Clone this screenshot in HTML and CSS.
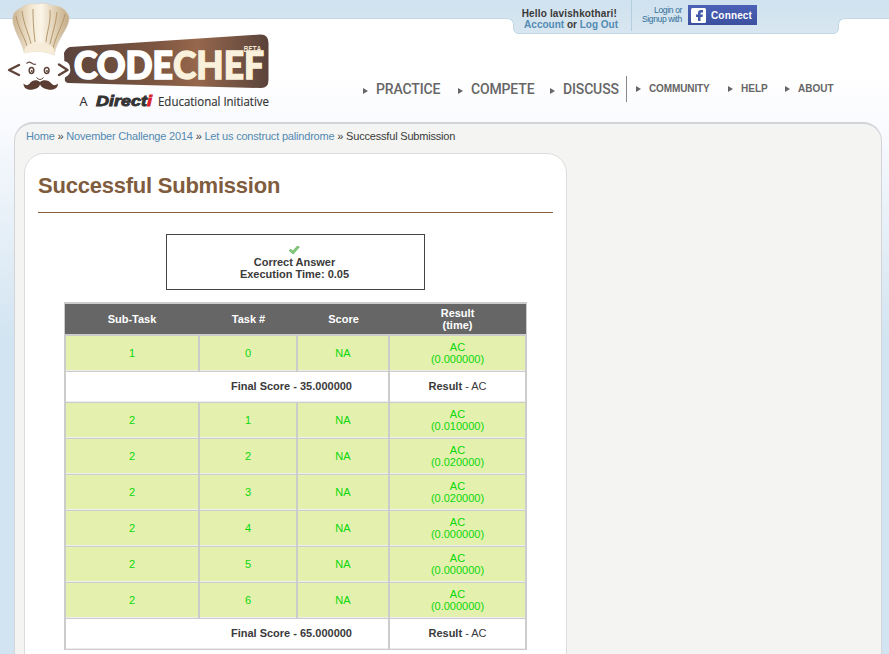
FILE: index.html
```
<!DOCTYPE html>
<html lang="en">
<head>
<meta charset="utf-8">
<title>Successful Submission | CodeChef</title>
<link rel="stylesheet" href="styles.css">
</head>
<body>
<header class="header">
  <svg class="topbar" width="889" height="36" viewBox="0 0 889 36">
    <defs><linearGradient id="bar" x1="0" y1="0" x2="0" y2="1"><stop offset="0" stop-color="#cfe2ef"/><stop offset="1" stop-color="#d8e6f0"/></linearGradient></defs>
    <path d="M-2-2V18.500H506Q513.500 18.500 513.500 25V28Q513.500 33.500 519 33.500H833Q838.500 33.500 838.500 28V25Q838.500 18.500 846 18.500H891V-2Z" fill="url(#bar)" stroke="#c3d8e5"/>
  </svg>
  <svg class="logo" width="280" height="116" viewBox="0 0 280 116">
    <defs>
      <linearGradient id="board" x1="0" x2="1"><stop offset="0" stop-color="#5b443c"/><stop offset=".45" stop-color="#7d5641"/><stop offset=".65" stop-color="#96674c"/><stop offset="1" stop-color="#5a433b"/></linearGradient>
      <linearGradient id="hat" x1="0" x2="1"><stop offset="0" stop-color="#cbb391"/><stop offset=".3" stop-color="#f0e5cf"/><stop offset=".5" stop-color="#fbf5e8"/><stop offset=".75" stop-color="#e0cfb2"/><stop offset="1" stop-color="#c2aa86"/></linearGradient>
    </defs>
    <path d="M70 47L260 34.500Q268.500 34 268.500 43V80Q268.500 88.500 260 88L68 83Q64 82 65 78L64 53Q66 48 70 47Z" fill="url(#board)"/>
    <path d="M24 52C19 57 16 60 15 65C14 72 18 77 23 78C26 87 52 87 57 79C66 79 72 74 70 68C70 62 65 60 60 62C58 57 57 54 54 52Z" fill="#fff"/>
    <path d="M24 51C19 36 11 26 13 16C14 10 20 9 24 6C30 3 34 4 38 4C44 2 49 4 53 6C60 5 67 10 69 17C70 28 57 38 54 55C43 50 32 51 24 53Z" fill="url(#hat)" stroke="#d6cec0" stroke-width=".6"/>
    <path d="M16 16C18 28 24 36 27 46M22 11C24 26 29 34 31 44M33 9C33 24 34 32 35 42M50 10C51 23 47 31 46 42M57 12C56 24 52 34 50 44M65 14C63 25 55 37 53 49" fill="none" stroke="#b4976b" stroke-width="1"/>
    <path d="M24 53Q24 44 34 43T53 47Q55 50 54 55Q40 49 24 53Z" fill="#f6ecd8"/>
    <g fill="none" stroke="#60443a" stroke-width="2.400" stroke-linecap="round" stroke-linejoin="round"><path d="M19 65L9 70L19 75"/><path d="M59 64.500L67.500 70L59 75"/></g>
    <path d="M26.500 63.500Q29 61 31.500 63T36 64" fill="none" stroke="#60443a" stroke-width="1.200"/>
    <ellipse cx="31.500" cy="70.500" rx="2.300" ry="2.900" fill="#fff" stroke="#60443a" stroke-width="1.500"/><circle cx="31.800" cy="71" r="1" fill="#60443a"/>
    <ellipse cx="46.700" cy="70.500" rx="2.300" ry="2.900" fill="#fff" stroke="#60443a" stroke-width="1.500"/><circle cx="47" cy="71" r="1" fill="#60443a"/>
    <path d="M36.500 77.500Q40 81.500 43.500 77.500" fill="none" stroke="#60443a"/>
    <path d="M40 82C37 79 32 80 30 83C28.500 85.500 26 86 23.500 83.500C23.500 90 30 90 33 89.500C37 89 39.500 87 40 84.500C41 87 44 89 48 89.500C51 90 58 90 58 83.500C55 86 53 85.500 51 83C49 80 43 79 40 82Z" fill="#5b3d34"/>
    <text class="logo-code" x="74" y="78.500" textLength="99" lengthAdjust="spacingAndGlyphs">CODE</text>
    <text class="logo-chef" x="173" y="79" textLength="91" lengthAdjust="spacingAndGlyphs">CHEF</text>
    <text class="logo-beta" x="243.500" y="51.500" textLength="18" lengthAdjust="spacingAndGlyphs">BETA</text>
    <text class="tag" x="79.500" y="106" textLength="8" lengthAdjust="spacingAndGlyphs">A</text>
    <text class="directi" x="96" y="106" textLength="56" lengthAdjust="spacingAndGlyphs">Direct<tspan fill="#d9232e">i</tspan></text>
    <text class="tag" x="158" y="106" textLength="111" lengthAdjust="spacingAndGlyphs">Educational Initiative</text>
  </svg>
  <div class="right">
    <div class="account">
      <div class="hello"><span class="who">Hello lavishkothari!</span><br><a>Account</a> or <a>Log Out</a></div>
      <div class="login">Login or<br>Signup with</div>
      <div class="connect">
        <svg width="15" height="15" viewBox="0 0 15 15"><rect width="15" height="15" rx="1.500" fill="#fff"/><path d="M7 13V9H5V6.500H7V5Q7 2 10 2H12V4.500H10.500Q9.500 4.500 9.500 5.500V6.500H12L11.500 9H9.500V13Z" fill="#4358aa"/></svg>
        <span>Connect</span>
      </div>
    </div>
    <nav class="nav">
      <a class="big practice">PRACTICE</a><a class="big compete">COMPETE</a><a class="big discuss">DISCUSS</a>
      <span class="divider"></span>
      <a class="small community">COMMUNITY</a><a class="small help">HELP</a><a class="small about">ABOUT</a>
    </nav>
  </div>
</header>
<main class="page">
  <div class="crumbs"><a>Home</a> » <a>November Challenge 2014</a> » <a>Let us construct palindrome</a> » Successful Submission</div>
  <section class="card">
    <h1><span>Successful Submission</span></h1>
    <div class="verdict">
      <svg width="12" height="10" viewBox="0 0 12 10"><path d="M1 5.500L2.800 4.300L4.800 6L9.500 1L11.300 2L5.200 9Z" fill="#83cb78" stroke="#5fae5c" stroke-width=".7"/></svg>
      <div><span>Correct Answer</span></div>
      <div><span>Execution Time: 0.05</span></div>
    </div>
    <table class="results">
      <colgroup><col class="c1"><col class="c2"><col class="c3"><col class="c4"></colgroup>
      <thead><tr><th>Sub-Task</th><th>Task #</th><th>Score</th><th>Result<br>(time)</th></tr></thead>
      <tbody>
      <tr class="ac"><td>1</td><td>0</td><td>NA</td><td>AC<br>(0.000000)</td></tr>
      <tr class="total"><td colspan="3"><b>Final Score - 35.000000</b></td><td><b>Result</b> - AC</td></tr>
      <tr class="ac"><td>2</td><td>1</td><td>NA</td><td>AC<br>(0.010000)</td></tr>
      <tr class="ac"><td>2</td><td>2</td><td>NA</td><td>AC<br>(0.020000)</td></tr>
      <tr class="ac"><td>2</td><td>3</td><td>NA</td><td>AC<br>(0.020000)</td></tr>
      <tr class="ac"><td>2</td><td>4</td><td>NA</td><td>AC<br>(0.000000)</td></tr>
      <tr class="ac"><td>2</td><td>5</td><td>NA</td><td>AC<br>(0.000000)</td></tr>
      <tr class="ac"><td>2</td><td>6</td><td>NA</td><td>AC<br>(0.000000)</td></tr>
      <tr class="total"><td colspan="3"><b>Final Score - 65.000000</b></td><td><b>Result</b> - AC</td></tr>
      </tbody>
    </table>
  </section>
</main>
</body>
</html>
```
FILE: styles.css
```
* { box-sizing: border-box; }
body {
  margin: 0;
  height: 654px;
  overflow: hidden;
  font: 11px/12px "Liberation Sans", Arial, sans-serif;
  color: #3a3a3a;
  background: linear-gradient(#fff 0, #fff 70px, #fafbfe 120px, #d2e4f1 340px, #d2e4f1 100%);
}
a { color: #528ab2; }
.header { position: relative; height: 122px; display: flex; }
.topbar { position: absolute; left: 0; top: 0; }
.logo { position: relative; flex: none; }
.logo-code, .logo-chef { font: 900 37px Lato, sans-serif; stroke-width: 1.7px; }
.logo-code { fill: #fff; stroke: #fff; }
.logo-chef { fill: #faf1dc; stroke: #faf1dc; stroke-width: 1.3px; }
.logo-beta { font: 600 8.5px "Open Sans", sans-serif; fill: #f4e8d4; }
.tag { font: 12.5px "Open Sans", sans-serif; fill: #333; stroke: #333; stroke-width: .15px; }
.directi { font: italic bold 14px "Liberation Sans", sans-serif; fill: #333; stroke: #333; stroke-width: .8px; }
.directi tspan { stroke: #d9232e; }
.right { position: relative; flex: 1; display: flex; flex-direction: column; }
.account { display: flex; height: 31px; padding-left: 232px; }
.hello {
  width: 120px;
  padding: 8px 13px 0 0;
  text-align: right;
  font: bold 10px/11px "Liberation Sans", Arial, sans-serif;
  white-space: nowrap;
  border-right: 1px solid #b5cedd;
}
.who { margin-right: 1px; letter-spacing: .15px; }
.login {
  width: 50px;
  padding-top: 6px;
  text-align: right;
  font-size: 8.5px;
  line-height: 9px;
  letter-spacing: -.35px;
  color: #336f98;
  white-space: nowrap;
}
.connect {
  display: flex;
  align-items: center;
  gap: 5px;
  width: 69px;
  height: 20px;
  margin: 5px 0 0 6px;
  padding-left: 3px;
  background: linear-gradient(#4c62b7, #3c509f);
  color: #fff;
  font-weight: bold;
  font-size: 10px;
  letter-spacing: .15px;
}
.connect span { margin-top: 1px; }
.nav { display: flex; align-items: center; height: 26px; margin-top: 45px; padding-left: 83px; color: #666; }
.nav a { position: relative; flex: none; display: flex; align-items: center; color: #666; white-space: nowrap; }
.nav a::before {
  content: "";
  border: solid transparent;
  border-width: 3.5px 0 3.5px 5px;
  border-left-color: #666;
}
.big { font: 500 14px/16px Roboto, sans-serif; letter-spacing: -.15px; }
.big::before { margin: 3px 8px 0 0; }
.practice { width: 95px; }
.compete { width: 92px; }
.discuss { width: 76px; }
.divider { width: 1px; height: 26px; background: #888; }
.small { font: bold 10px/12px "Liberation Sans", Arial, sans-serif; }
.small::before { margin-right: 8px; }
.community { margin-left: 9px; width: 92px; letter-spacing: -.12px; }
.help { width: 57px; }
.page {
  width: 868px;
  height: 560px;
  margin-left: 14px;
  padding: 6px 9px 0;
  background: #f4f4f2;
  border: solid #d2d4d7;
  border-width: 2px 1px 0 1px;
  border-radius: 19px 19px 0 0;
}
.crumbs { padding-left: 2px; line-height: 13px; letter-spacing: -.19px; white-space: nowrap; }
.card {
  width: 543px;
  height: 530px;
  margin-top: 10px;
  padding: 0 13px;
  background: #fff;
  border: 1px solid #dcdcdc;
  border-radius: 20px 20px 0 0;
}
h1 {
  margin: 0;
  height: 59px;
  padding-top: 18px;
  border-bottom: 1px solid #84603f;
  color: #7f5c3d;
  font-size: 22px;
  line-height: 27px;
  letter-spacing: -.23px;
}
.verdict {
  width: 259px;
  height: 56px;
  margin: 21px 0 0 128px;
  padding: 10px 2px 0 0;
  border: 1px solid #444;
  text-align: center;
  font-weight: bold;
}
.verdict svg { display: block; margin: 0 auto 1px 121px; }
.results {
  width: 463px;
  margin: 12px 0 0 26px;
  table-layout: fixed;
  border-collapse: separate;
  border-spacing: 0;
  border: solid #ccc;
  border-width: 1px 0 0 1px;
}
.c1 { width: 135px; }
.c2 { width: 98px; }
.c3 { width: 92px; }
.c4 { width: 137px; }
th, td { padding: 0; text-align: center; vertical-align: middle; }
th {
  height: 33px;
  padding-right: 1px;
  background: #666;
  color: #fff;
  border: solid #ccc;
  border-width: 1px 0 2px;
}
th:last-child { border-right: 1px solid #ccc; }
td { padding-bottom: 2px; border: solid #ccc; border-width: 0 2px 1px 0; box-shadow: inset 0 -1px #eee; }
td:first-child { border-left: 1px solid #ccc; }
.ac td { height: 36px; background: #e4f0ae; color: #0ad80a; }
.total td { height: 31px; }
.total td:first-child { text-align: right; padding-right: 36px; }
```
